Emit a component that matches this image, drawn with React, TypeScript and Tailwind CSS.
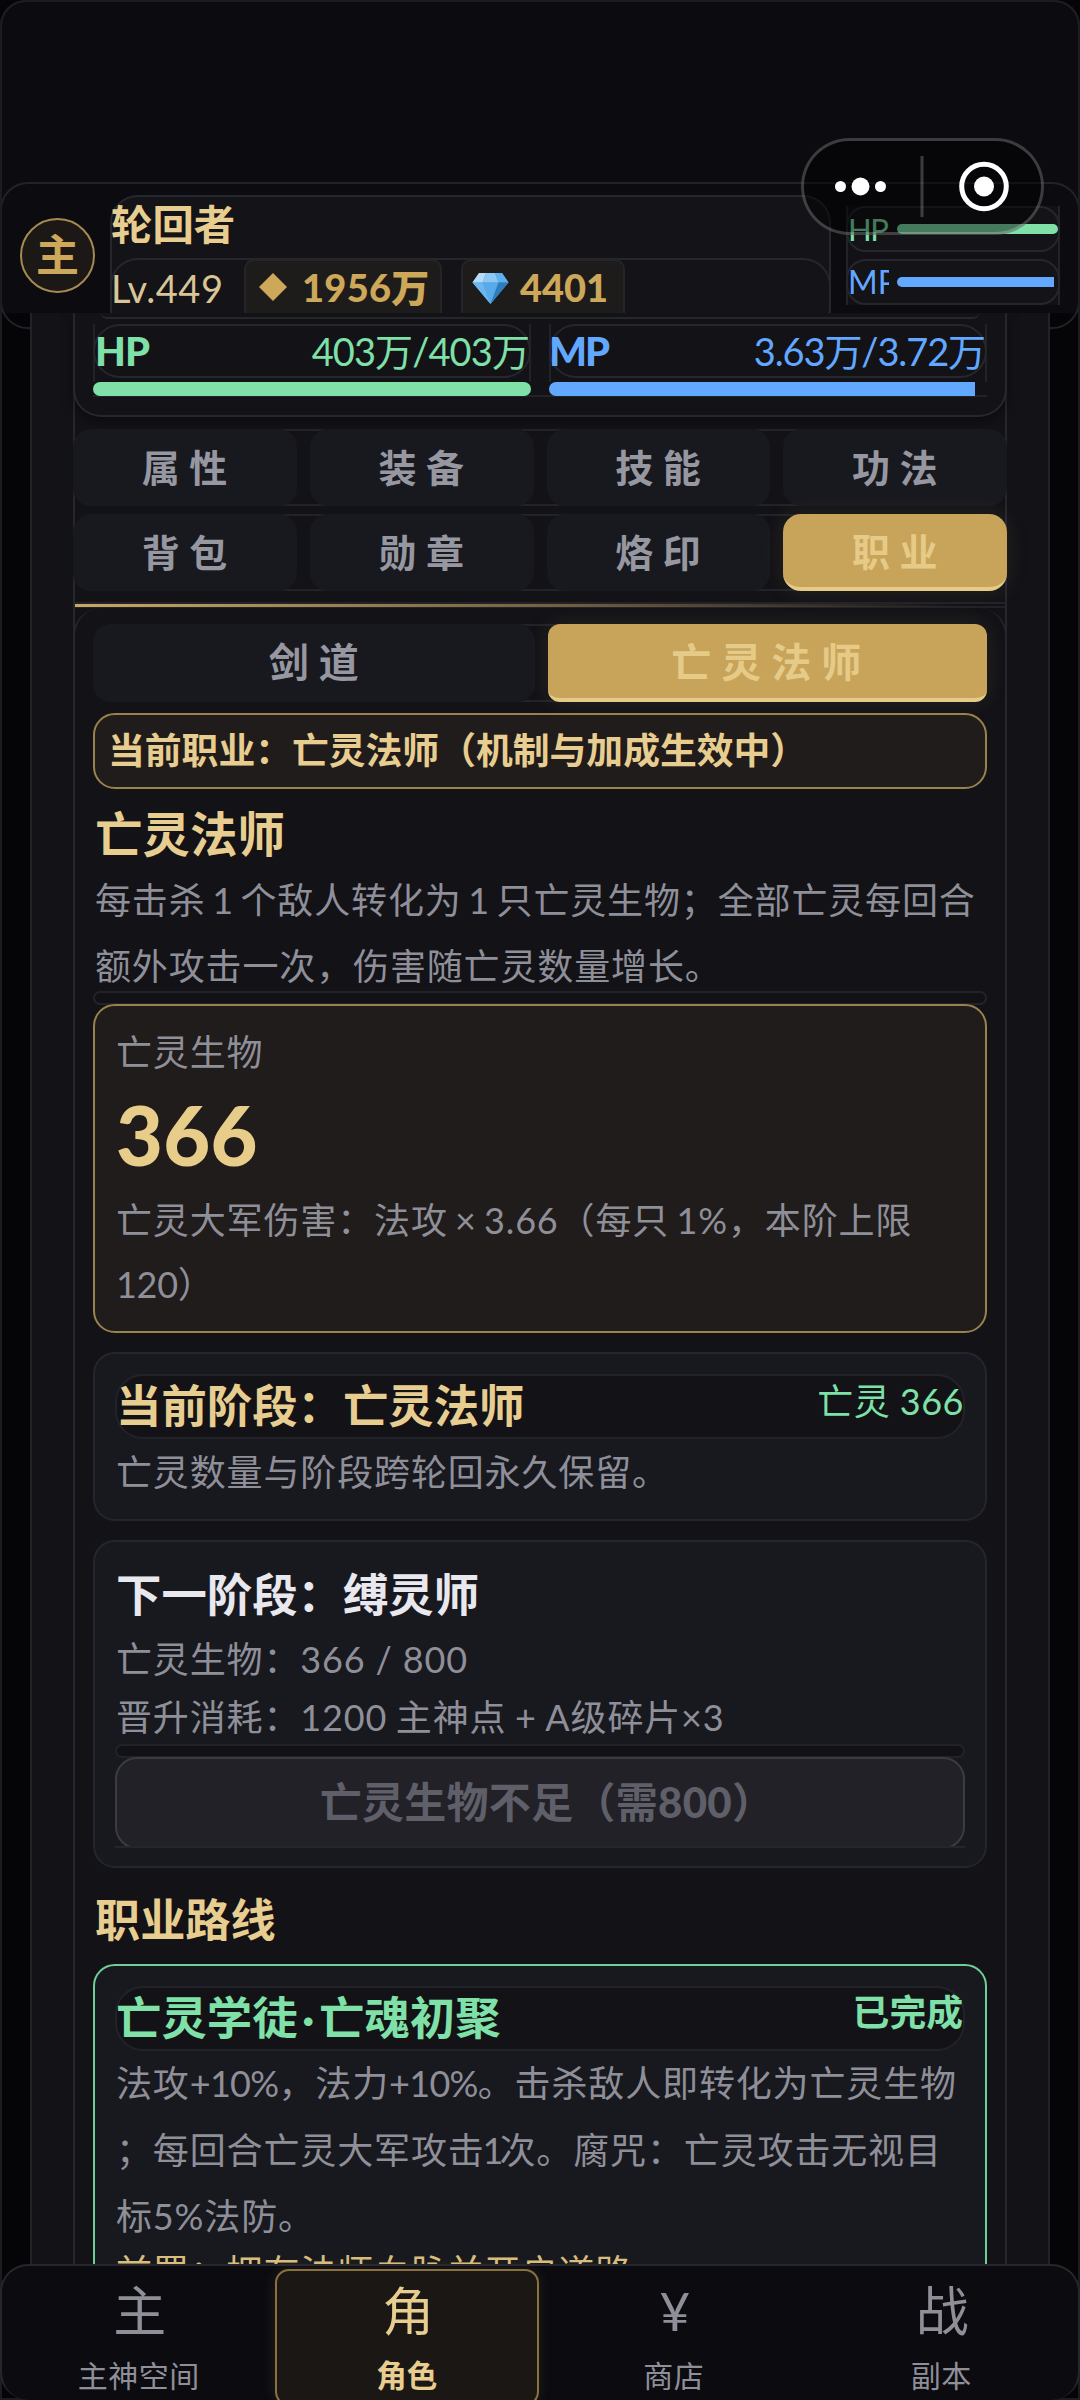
import React from "react";

const TABS_TOP = ["属性", "装备", "技能", "功法"];
const TABS_BOTTOM = ["背包", "勋章", "烙印", "职业"];

const NAV_ITEMS = [
  { icon: "主", label: "主神空间" },
  { icon: "角", label: "角色" },
  { icon: "¥", label: "商店" },
  { icon: "战", label: "副本" },
];

const Gem: React.FC = () => (
  <svg width="37" height="33" viewBox="0 0 37 33">
    <path d="M7 1h23l6.5 9.5L18.500 32 .5 10.500z" fill="#4d9fe0" />
    <path d="M7 1h7l-3.500 9.500H.5z" fill="#b4dcf8" />
    <path d="M14 1h9l3.500 9.500h-16z" fill="#8cc8f4" />
    <path d="M23 1h7l6.500 9.500h-10z" fill="#5fb0ec" />
    <path d="M.5 10.500h10L18.500 32z" fill="#6bb8f0" />
    <path d="M10.500 10.500h16L18.500 32z" fill="#58aaea" />
    <path d="M26.500 10.500h10L18.500 32z" fill="#2f7dbd" />
  </svg>
);

const TabRow: React.FC<{ tabs: string[]; active?: string }> = ({ tabs, active }) => (
  <div className="relative h-[77px] rounded-[20px] border-2 border-[#222229]">
    <div className="-m-[2px] grid h-[77px] grid-cols-4 gap-[13px]">
      {tabs.map((tab) => (
        <button
          key={tab}
          className={
            tab === active
              ? "rounded-[18px] border-b-4 border-[#e6cb88] bg-[#c8a45a] pl-[9px] pt-[1px] text-[38px] leading-[72px] font-bold tracking-[9.5px] text-[#e6cb88] shadow-[0_0_24px_rgba(200,164,90,0.12)]"
              : "rounded-[18px] bg-[#18191f] pb-[2px] pl-[9px] text-[38px] leading-[74px] font-bold tracking-[9.5px] text-[#9797a1]"
          }
        >
          {tab}
        </button>
      ))}
    </div>
  </div>
);

const App: React.FC = () => {
  return (
    <div className="relative flex h-[2400px] w-[1080px] flex-col overflow-hidden bg-[#050507] font-[Lato,'Noto_Sans_CJK_SC',sans-serif] text-[#8f8f99]">
      {/* page frame */}
      <div className="pointer-events-none absolute inset-0 rounded-t-[26px] border-2 border-[#1c1c22]" />

      {/* STATUS SPACE */}
      <div className="h-[182px] shrink-0 rounded-t-[26px] border-2 border-b-0 border-[#1e1e24] bg-[#0b0b10]" />

      {/* HEADER */}
      <div className="bg-[linear-gradient(#0b0b10_50%,transparent_50%)]">
        <header className="-mb-[16px] h-[147px] rounded-[28px] border-2 border-[#222229] bg-[linear-gradient(#0b0b10_129px,transparent_129px)]">
          <div className="flex h-[129px] overflow-hidden pl-[18px]">
            <div className="mt-[34px] flex h-[75px] w-[75px] shrink-0 items-center justify-center rounded-full border-2 border-[#a58b52] bg-[#1b1816] text-[43px] font-bold text-[#cda75a]">
              主
            </div>

            <div className="mt-[11px] ml-[15px] h-[140px] w-[721px] shrink-0 rounded-[28px] border-2 border-[#26262d] bg-[#131318]">
              <p className="-ml-[1px] h-[61px] text-[41.400px] leading-[55px] font-bold text-[#e8cd90]">
                轮回者
              </p>
              <div className="-mx-[2px] flex h-[80px] rounded-[28px] border-2 border-[#26262d]">
                <span className="-ml-[1px] w-[133px] text-[38px] leading-[56px] tracking-[0.500px] text-[#d9c596]">
                  Lv.449
                </span>
                <div className="-mt-[1px] flex h-[80px] w-[198px] items-start rounded-[10px] border-2 border-[#24242a] bg-[#1e1c1b]">
                  <svg width="28" height="28" viewBox="0 0 28 28" className="mt-[12px] ml-[13px]">
                    <path d="M14 0 28 14 14 28 0 14z" fill="#cda75a" />
                  </svg>
                  <span className="ml-[15px] text-[38px] leading-[53px] font-black tracking-[0.300px] text-[#cda75a]">
                    1956万
                  </span>
                </div>
                <div className="-mt-[1px] ml-[19px] flex h-[80px] w-[164px] items-start rounded-[10px] border-2 border-[#24242a] bg-[#1e1c1b]">
                  <div className="mt-[11px] ml-[9px] shrink-0">
                    <Gem />
                  </div>
                  <span className="ml-[11px] text-[38px] leading-[53px] font-black text-[#cda75a]">
                    4401
                  </span>
                </div>
              </div>
            </div>

            {/* mini bars */}
            <div className="mt-[22px] ml-[15px] flex h-[99px] w-[214px] shrink-0 flex-col justify-between border-x-2 border-[#222229] bg-[#111116]">
              <div className="-mx-[2px] flex h-[46px] items-center rounded-[20px] border-2 border-[#26262d] bg-[#131318]">
                <span className="w-[42px] overflow-hidden text-[31px] leading-[44px] tracking-[-1.5px] text-[#7fe0a8]">
                  HP
                </span>
                <div className="ml-[7px] h-[10px] w-[161px] rounded-full bg-[#7fe0a8]" />
              </div>
              <div className="-mx-[2px] flex h-[46px] items-center rounded-[20px] border-2 border-[#26262d] bg-[#131318]">
                <span className="w-[41px] overflow-hidden text-[32px] leading-[44px] text-[#63a8ff]">
                  MP
                </span>
                <div className="ml-[8px] h-[10px] w-[157px] rounded-l-full bg-[#63a8ff]" />
              </div>
            </div>
          </div>
        </header>
      </div>

      {/* MAIN PANEL */}
      <main className="relative mx-[30px] h-[1951px] shrink-0 overflow-hidden border-x-2 border-[#222229] bg-[#121217] px-[41px]">
        <div className="h-[2100px] border-x-2 border-[#26262d] bg-[#121217]">
          {/* HP / MP */}
          <section className="-mx-[2px] h-[104px] rounded-b-[28px] border-2 border-t-0 border-[#26262d] px-[18px] shadow-[0_4px_12px_rgba(0,0,0,0.35)]">
            <div className="mx-[8px] h-[6px] rounded-b-[20px] border-b-2 border-[#26262d]" />
            <div className="mt-[5px] flex h-[73px] justify-between border-b-2 border-[#222229]">
              <div className="w-[438px]">
                <div className="h-[58px] border-x-2 border-[#222229]">
                  <div className="-mx-[2px] flex h-[54px] justify-between rounded-[28px] border-2 border-[#26262d] leading-[50px] text-[#7fe0a8]">
                    <span className="text-[40px] font-black tracking-[-1px]">HP</span>
                    <span className="text-[38px] tracking-[-0.900px]">403万/403万</span>
                  </div>
                </div>
                <div className="relative h-[14px] rounded-full bg-[#7fe0a8]" />
              </div>
              <div className="w-[438px]">
                <div className="h-[58px] border-x-2 border-[#222229]">
                  <div className="-mx-[2px] flex h-[54px] justify-between rounded-[28px] border-2 border-[#26262d] leading-[50px] text-[#63a8ff]">
                    <span className="-ml-[2px] text-[40px] font-black tracking-[-2px]">MP</span>
                    <span className="text-[38px] tracking-[-1.100px]">3.63万/3.72万</span>
                  </div>
                </div>
                <div className="relative h-[14px] w-[426px] rounded-l-full bg-[#63a8ff]" />
              </div>
            </div>
          </section>

          {/* TABS */}
          <section className="-mx-[2px] mt-[12px] flex flex-col gap-[8px]">
            <TabRow tabs={TABS_TOP} />
            <TabRow tabs={TABS_BOTTOM} active="职业" />
          </section>

          <div className="mt-[11px] h-[6px] border-y-2 border-[#222229]">
            <div className="relative h-[3px] w-full bg-[linear-gradient(90deg,#c9a864,#6d5c3e_55%,transparent_95%)]" />
          </div>

          {/* CAREER */}
          <section className="-mx-[2px] h-[1700px] rounded-t-[28px] border-x-2 border-[#26262d] px-[18px] pt-[16px]">
            <div className="rounded-[20px] border-y-2 border-[#222229]">
              <div className="-my-[2px] flex gap-[13px]">
                <button className="h-[78px] flex-1 rounded-[18px] bg-[#18191f] pb-[2px] pl-[10px] text-[40px] leading-[76px] font-bold tracking-[10px] text-[#9797a1]">
                  剑道
                </button>
                <button className="h-[78px] flex-1 rounded-[12px] border-b-4 border-[#e6cb88] bg-[#c8a45a] pl-[8px] pt-[2px] text-[40px] leading-[72px] font-bold tracking-[10px] text-[#e6cb88] shadow-[0_0_24px_rgba(200,164,90,0.12)]">
                  亡灵法师
                </button>
              </div>
            </div>

            <div className="mt-[11px] h-[76px] rounded-[22px] border-2 border-[#9a824e] bg-[#201c1b] pl-[13px] text-[36.800px] leading-[71px] font-bold text-[#e8cd90]">
              当前职业：亡灵法师（机制与加成生效中）
            </div>

            <h2 className="mt-[12px] h-[66px] pl-[2px] text-[47.500px] leading-[66px] font-bold text-[#e8cd90]">
              亡灵法师
            </h2>
            <p className="h-[124px] pl-[2px] text-[36px] leading-[66px] tracking-[0.860px] [word-spacing:-3.500px] whitespace-nowrap">
              每击杀 1 个敌人转化为 1 只亡灵生物；全部亡灵每回合
              <br />
              额外攻击一次，伤害随亡灵数量增长。
            </p>

            <div className="h-[14px] rounded-full border-2 border-[#222229] bg-[#111116]" />
            <div className="relative -mt-[1px] h-[329px] rounded-[22px] border-2 border-[#9a824e] bg-[#201c1b] pt-[16px] pl-[21px] text-[36px] tracking-[0.860px]">
              <p className="leading-[60px]">亡灵生物</p>
              <p className="mt-[1px] h-[105px] text-[81px] leading-[104px] font-black tracking-[0.300px] text-[#e8cd8a]">
                366
              </p>
              <p className="leading-[64px] [word-spacing:-2.800px] whitespace-nowrap">
                亡灵大军伤害：法攻 × 3.66（每只 1%，本阶上限
                <br />
                <span className="tracking-[-0.300px]">120）</span>
              </p>
            </div>

            {/* current stage */}
            <div className="mt-[19px] h-[169px] rounded-[22px] border-2 border-[#25262d] bg-[#18191f] px-[20px] pt-[20px]">
              <div className="flex h-[65px] justify-between rounded-[28px] border-2 border-[#222229] bg-[#121217]">
                <span className="-ml-[1px] text-[45.400px] leading-[60px] font-bold text-[#e8cd90]">
                  当前阶段：亡灵法师
                </span>
                <span className="-mr-[1px] text-[36px] leading-[50px] tracking-[0.500px] text-[#7fe0a8]">亡灵 366</span>
              </div>
              <p className="pl-[1px] text-[36px] leading-[66px] tracking-[0.860px]">
                亡灵数量与阶段跨轮回永久保留。
              </p>
            </div>

            {/* next stage */}
            <div className="mt-[19px] h-[328px] rounded-[22px] border-2 border-[#25262d] bg-[#18191f] px-[20px] pt-[20px]">
              <p className="pl-[1px] text-[45.400px] leading-[66px] font-bold text-[#e8e8ee]">
                下一阶段：缚灵师
              </p>
              <p className="mt-[2px] pl-[1px] text-[36px] leading-[58px] tracking-[0.860px]">
                亡灵生物：366 / 800
              </p>
              <p className="h-[57px] pl-[1px] text-[36px] leading-[59px] tracking-[0.860px] [word-spacing:-1.500px]">
                晋升消耗：1200 主神点 + A级碎片×3
              </p>
              <div className="-mt-[1px] h-[14px] rounded-full border-2 border-[#222229] bg-[#111116]" />
              <div className="relative -mt-[1px] h-[91px] overflow-hidden border-b-2 border-[#25262d]">
                <button className="h-[92px] w-full rounded-[22px] border-2 border-[#3b3b42] bg-[#222127] pb-[2px] pl-[14px] text-[42px] font-bold tracking-[0.300px] text-[#5f5f69]">
                  亡灵生物不足（需<span className="font-black">800</span>）
                </button>
              </div>
            </div>

            {/* route */}
            <h3 className="mt-[21px] h-[62px] pl-[2px] text-[45.200px] leading-[62px] font-bold text-[#e8cd90]">
              职业路线
            </h3>
            <div className="mt-[13px] h-[400px] rounded-[22px] border-2 border-[#6fcf97] bg-[#18191f] px-[20px] pt-[20px]">
              <div className="flex h-[65px] justify-between rounded-[28px] border-2 border-[#222229] bg-[#121217]">
                <span className="-ml-[1px] text-[45.400px] leading-[60px] font-bold text-[#7fe0a8]">
                  亡灵学徒<span className="px-[4.5px]">·</span>亡魂初聚
                </span>
                <span className="text-[36.800px] leading-[49px] font-bold text-[#7fe0a8]">
                  已完成
                </span>
              </div>
              <p className="-mt-[1px] pl-[1px] text-[36px] leading-[66.500px] tracking-[0.860px] whitespace-nowrap">
                法攻<span className="tracking-[-0.700px]">+10%</span>，法力
                <span className="tracking-[-0.700px]">+10%</span>。击杀敌人即转化为亡灵生物
                <br />
                ；每回合亡灵大军攻击<span className="-mx-[2px] tracking-[-2px]">1</span>次。腐咒：亡灵攻击无视目
                <br />
                标5%法防。
              </p>
              <p className="-mt-[1px] pl-[1px] text-[36px] leading-[46px] tracking-[0.860px] text-[#d9bd7c]">
                前置：拥有法师血脉并开启道路
              </p>
            </div>
          </section>
        </div>
      </main>

      {/* BOTTOM NAV */}
      <nav className="relative grid h-[136px] shrink-0 grid-cols-4 rounded-[28px] border-2 border-b-0 border-[#26262d] bg-[#0b0b10] px-[3px]">
        {NAV_ITEMS.map((item) =>
          item.label === "角色" ? (
            <div
              key={item.label}
              className="mr-[1px] ml-[2px] mt-[3px] flex flex-col items-center rounded-[14px] border-2 border-[#8a7140] bg-[#1a1715] text-[#e8cd90] shadow-[0_0_16px_rgba(200,164,90,0.12)]"
            >
              <span className="h-[76px] pl-[3px] text-[52px] leading-[80px]">{item.icon}</span>
              <span className="text-[30.500px] leading-[57px] font-bold">{item.label}</span>
            </div>
          ) : (
            <div key={item.label} className="mt-[5px] flex flex-col items-center">
              <span className="h-[76px] pl-[2px] text-[53px] leading-[80px]">{item.icon}</span>
              <span className="text-[30px] leading-[57px] tracking-[0.500px]">{item.label}</span>
            </div>
          )
        )}
      </nav>

      {/* MINI PROGRAM CAPSULE */}
      <div className="absolute top-[138px] left-[801px] flex h-[97px] w-[243px] items-center rounded-full border-[3px] border-[#ffffff38] bg-[#00000073]">
        <svg width="237" height="91" viewBox="0 0 237 91">
          <circle cx="36.500" cy="45.500" r="5.500" fill="#fff" />
          <circle cx="56.500" cy="45.500" r="9" fill="#fff" />
          <circle cx="76.500" cy="45.500" r="5.500" fill="#fff" />
          <path d="M118 15v61" stroke="#ffffff38" strokeWidth="3" />
          <circle cx="180" cy="45.500" r="22.300" fill="none" stroke="#fff" strokeWidth="5" />
          <circle cx="180" cy="45.500" r="10" fill="#fff" />
        </svg>
      </div>
    </div>
  );
};

export default App;
